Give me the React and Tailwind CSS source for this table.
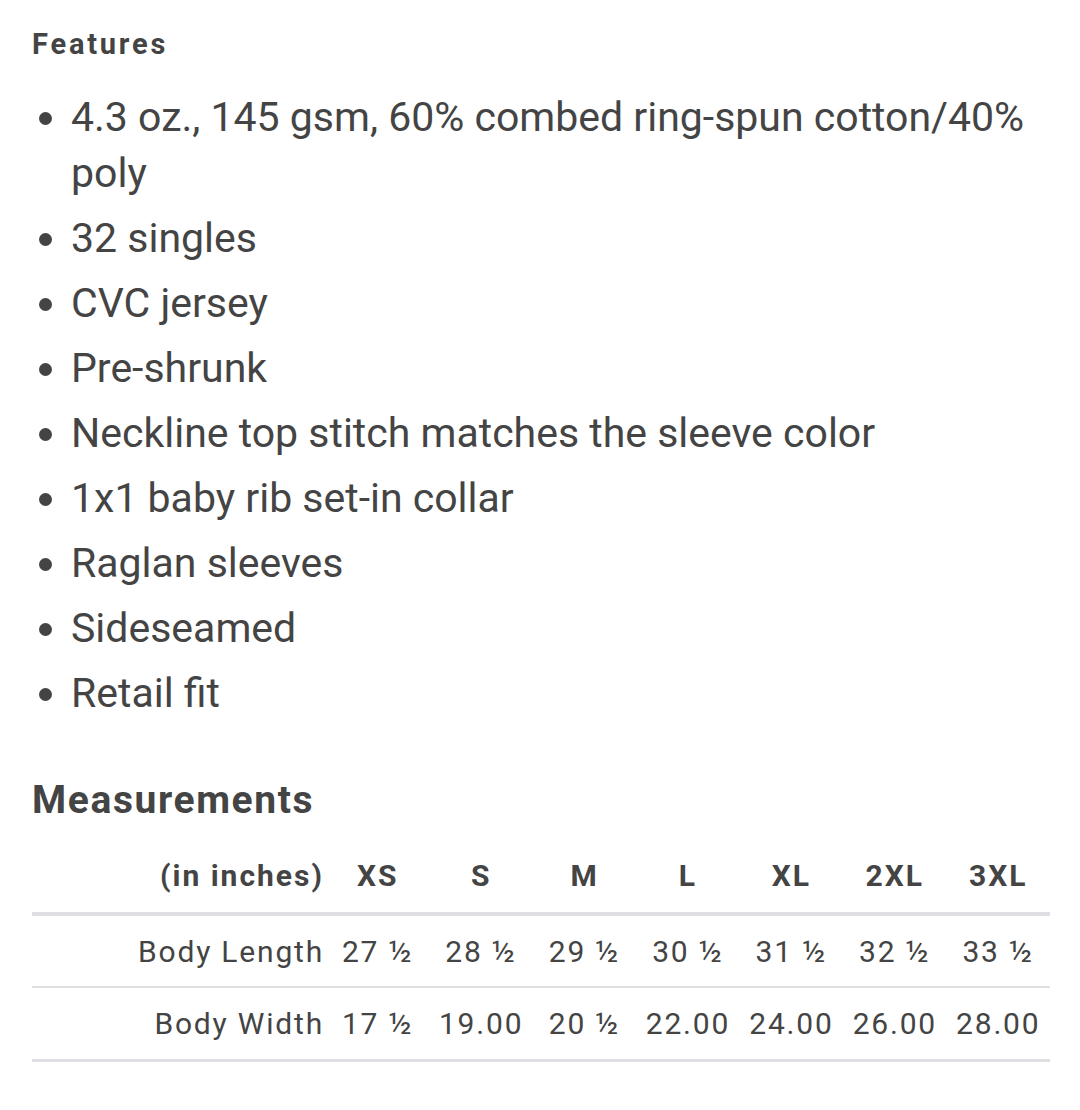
const features = [
  "4.3 oz., 145 gsm, 60% combed ring-spun cotton/40% poly",
  "32 singles",
  "CVC jersey",
  "Pre-shrunk",
  "Neckline top stitch matches the sleeve color",
  "1x1 baby rib set-in collar",
  "Raglan sleeves",
  "Sideseamed",
  "Retail fit",
];

const sizes = ["XS", "S", "M", "L", "XL", "2XL", "3XL"];

const rows = [
  { label: "Body Length", values: ["27 ½", "28 ½", "29 ½", "30 ½", "31 ½", "32 ½", "33 ½"] },
  { label: "Body Width", values: ["17 ½", "19.00", "20 ½", "22.00", "24.00", "26.00", "28.00"] },
];

function App() {
  return (
    <div
      className="w-[1080px] min-h-[1110px] bg-white text-[#444] px-[32px] pt-[24px]"
      style={{ fontFamily: "Roboto, 'Noto Sans', sans-serif" }}
    >
      <h3 className="text-[29px] font-bold leading-[40px] tracking-[2.8px]">Features</h3>

      <ul className="list-disc pl-[39px] mt-[25px] text-[41px] leading-[56px]">
        {features.map((f) => (
          <li key={f} className="mb-[9px]">
            {f}
          </li>
        ))}
      </ul>

      <h2 className="text-[39px] font-bold leading-[50px] mt-[54px] tracking-[1.6px]">Measurements</h2>

      <table className="w-[1018px] mt-[15px] border-collapse table-fixed">
        <colgroup>
          <col className="w-[294px]" />
          {sizes.map((s) => (
            <col key={s} />
          ))}
        </colgroup>
        <thead>
          <tr className="border-b-[4px] border-[#dfdfe3]">
            <th className="text-right font-bold text-[30px] tracking-[2px] h-[74px] pb-[1px] pr-[2px]">
              (in inches)
            </th>
            {sizes.map((s) => (
              <th key={s} className="text-center font-bold text-[30px] tracking-[2px] pb-[1px]">
                {s}
              </th>
            ))}
          </tr>
        </thead>
        <tbody>
          {rows.map((r, i) => (
            <tr
              key={r.label}
              className={i === rows.length - 1 ? "border-b-[3px] border-[#dfdfe3]" : "border-b-[2px] border-[#dfdfe3]"}
            >
              <td className="text-right text-[30px] tracking-[1.8px] h-[73px] pr-[2px]">{r.label}</td>
              {r.values.map((v, j) => (
                <td key={j} className="text-center text-[30px] tracking-[1.8px]">
                  {v}
                </td>
              ))}
            </tr>
          ))}
        </tbody>
      </table>
    </div>
  );
}

export default App;
